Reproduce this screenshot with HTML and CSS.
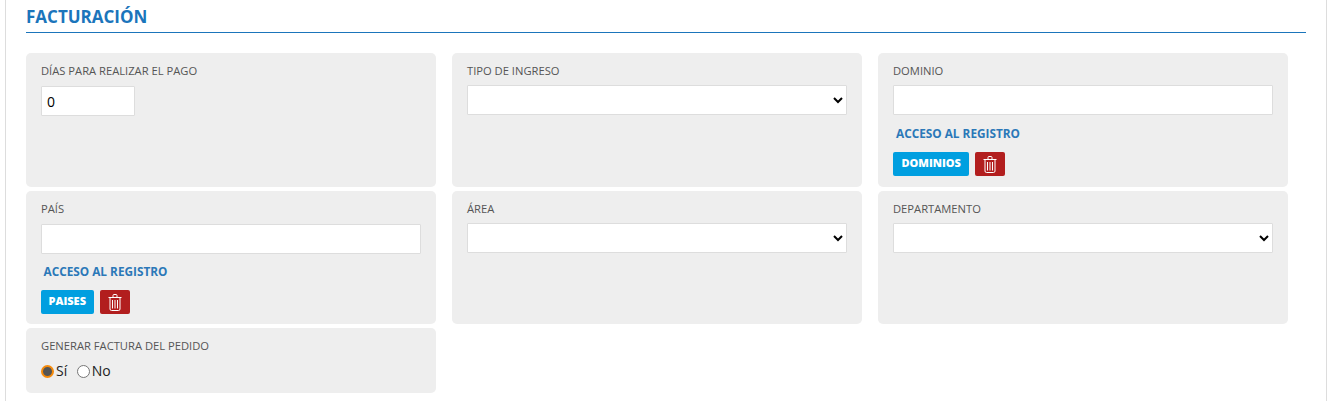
FILE: index.html
```html
<!DOCTYPE html>
<html lang="es">
  <head>
    <meta charset="UTF-8" />
    <title>Facturación</title>
    <link rel="stylesheet" href="styles.css">
  </head>
  <body>
    <main class="panel">
      <h2 class="titulo">FACTURACIÓN</h2>
      <section class="campos">
        <div class="campo">
          <label class="etiqueta">DÍAS PARA REALIZAR EL PAGO</label>
          <input class="entrada corta baja" type="text" value="0" />
        </div>
        <div class="campo">
          <label class="etiqueta">TIPO DE INGRESO</label>
          <select class="entrada"><option></option></select>
        </div>
        <div class="campo">
          <label class="etiqueta">DOMINIO</label>
          <input class="entrada" type="text" />
          <a class="acceso" href="#">ACCESO AL REGISTRO</a>
          <div class="botones">
            <button class="boton azul">DOMINIOS</button>
            <button class="boton rojo" aria-label="Borrar">
              <svg width="14" height="17" viewBox="0 0 14 17" fill="none" stroke="#fff" stroke-width="1">
                <path d="M.5 3.5h13M5 3.5V1.5q0-1 1-1h2q1 0 1 1v2" />
                <path d="M2 3.5v11.5q0 1.5 1.5 1.5h7q1.5 0 1.5-1.5V3.5" />
                <path d="M4.5 6v8.5M7 6v8.5M9.5 6v8.5" />
              </svg>
            </button>
          </div>
        </div>
        <div class="campo">
          <label class="etiqueta">PAÍS</label>
          <input class="entrada baja" type="text" />
          <a class="acceso" href="#">ACCESO AL REGISTRO</a>
          <div class="botones">
            <button class="boton azul paises">PAISES</button>
            <button class="boton rojo" aria-label="Borrar">
              <svg width="14" height="17" viewBox="0 0 14 17" fill="none" stroke="#fff" stroke-width="1">
                <path d="M.5 3.5h13M5 3.5V1.5q0-1 1-1h2q1 0 1 1v2" />
                <path d="M2 3.5v11.5q0 1.5 1.5 1.5h7q1.5 0 1.5-1.5V3.5" />
                <path d="M4.5 6v8.5M7 6v8.5M9.5 6v8.5" />
              </svg>
            </button>
          </div>
        </div>
        <div class="campo">
          <label class="etiqueta">ÁREA</label>
          <select class="entrada"><option></option></select>
        </div>
        <div class="campo">
          <label class="etiqueta">DEPARTAMENTO</label>
          <select class="entrada"><option></option></select>
        </div>
        <div class="campo">
          <label class="etiqueta">GENERAR FACTURA DEL PEDIDO</label>
          <div class="opciones">
            <label class="opcion"><input type="radio" name="factura" checked />Sí</label>
            <label class="opcion"><input type="radio" name="factura" />No</label>
          </div>
        </div>
      </section>
    </main>
  </body>
</html>
```

FILE: styles.css
```css
html, body {
  height: 100%;
}
body {
  margin: 0;
  background-color: white;
  font-family: "Open Sans", sans-serif;
  overflow: hidden;
}
.panel {
  box-sizing: border-box;
  width: 1322px;
  height: 401px;
  margin-left: 5px;
  padding: 0 20px;
  border-left: 1px solid #ddd;
  border-right: 1px solid #ddd;
}
.titulo {
  margin: 0 0 20px;
  height: 32px;
  line-height: 34px;
  font-size: 17px;
  font-weight: 700;
  color: #1b75bb;
  border-bottom: 1px solid #1b75bb;
}
.campos {
  display: grid;
  grid-template-columns: repeat(3, 410px);
  grid-template-rows: 134px 133px 65px;
  column-gap: 16px;
  row-gap: 4px;
}
.campo {
  background-color: #eee;
  border-radius: 5px;
  padding: 12px 15px 0;
}
.etiqueta {
  display: block;
  height: 20px;
  line-height: 12px;
  font-size: 11.2px;
  color: #555;
}
.entrada {
  display: block;
  box-sizing: border-box;
  width: 380px;
  height: 30px;
  padding: 0 5px;
  background-color: white;
  border: 1px solid #ddd;
  border-radius: 1px;
  font-family: "Open Sans", sans-serif;
  font-size: 14px;
  color: #000;
}
.baja {
  margin-top: 1px;
}
.corta {
  width: 94px;
}
.acceso {
  display: block;
  margin: 10px 0 0 3px;
  line-height: 17px;
  font-size: 11.8px;
  font-weight: 700;
  color: #2b78b8;
  text-decoration: none;
}
.baja + .acceso {
  margin: 9px 0 0 2.5px;
}
.botones {
  display: flex;
  gap: 6px;
  margin-top: 10px;
}
.boton {
  box-sizing: border-box;
  height: 24px;
  padding: 0 8.5px 3px;
  border: 0;
  border-radius: 2px;
  font-family: "Open Sans", sans-serif;
  font-size: 11px;
  font-weight: 800;
  color: white;
}
.azul {
  background-color: #009fe0;
}
.paises {
  padding: 0 7.5px 3px;
}
.rojo {
  display: flex;
  align-items: center;
  justify-content: center;
  width: 30px;
  padding: 0;
  background-color: #b21e1e;
}
.opciones {
  display: flex;
  gap: 9.5px;
  margin-top: 1px;
}
.opcion {
  display: flex;
  align-items: center;
  gap: 2px;
  line-height: 20px;
  font-size: 14px;
  color: #222;
}
.opcion input {
  appearance: none;
  box-sizing: border-box;
  width: 13px;
  height: 13px;
  margin: 0;
  background-color: white;
  border: 1px solid #767676;
  border-radius: 50%;
}
.opcion input:checked {
  background-color: #555;
  border: 2px solid #f58a0b;
}
```
